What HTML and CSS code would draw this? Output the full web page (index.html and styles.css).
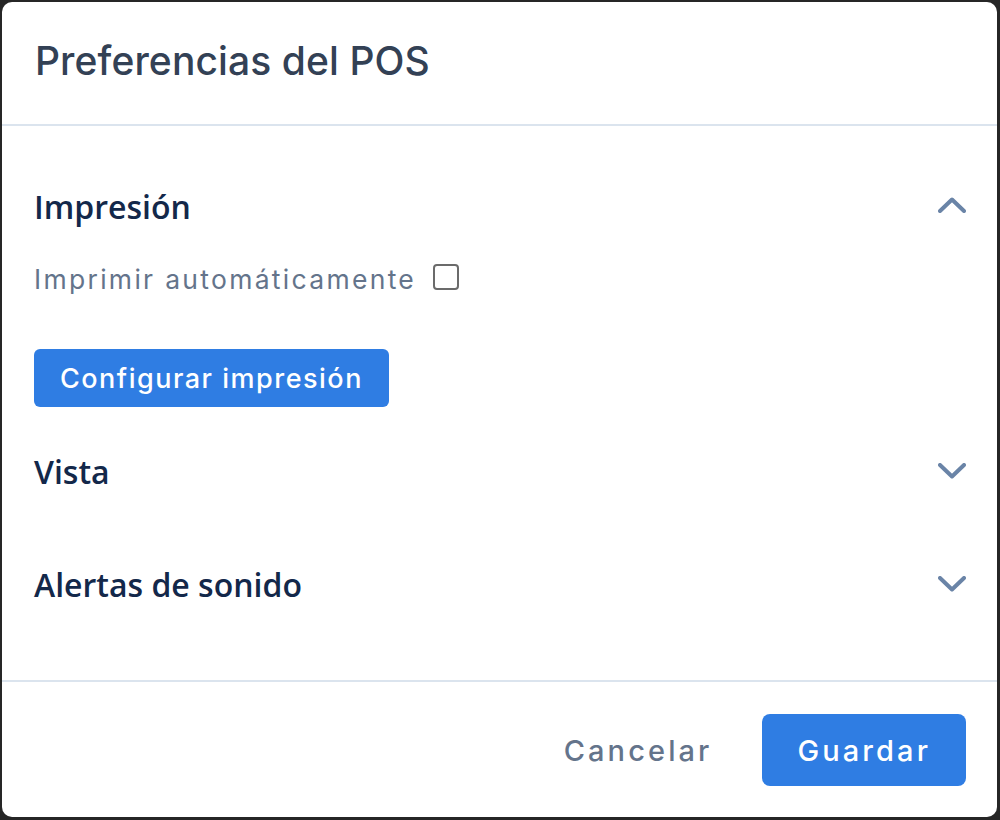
FILE: index.html
```html
<!DOCTYPE html>
<html lang="es">
<head>
<meta charset="utf-8">
<title>Preferencias del POS</title>
<link rel="stylesheet" href="styles.css">
</head>
<body>
<div class="dialog">
  <header class="dialog-header">
    <h1 class="dialog-title">Preferencias del POS</h1>
  </header>
  <main class="dialog-body">
    <section class="section is-open">
      <div class="section-head">
        <h2 class="section-title">Impresión</h2>
        <svg class="chevron chevron-up" width="28" height="16" viewBox="0 0 28 16"><polyline points="2,14 14,2.5 26,14" fill="none" stroke="currentColor" stroke-width="4" stroke-linecap="round" stroke-linejoin="round"/></svg>
      </div>
      <div class="section-content">
        <label class="check-row">
          <span class="check-label">Imprimir automáticamente</span>
          <span class="checkbox"></span>
        </label>
        <button class="btn btn-primary btn-config">Configurar impresión</button>
      </div>
    </section>
    <section class="section">
      <div class="section-head">
        <h2 class="section-title">Vista</h2>
        <svg class="chevron" width="28" height="16" viewBox="0 0 28 16"><polyline points="2,2 14,13.5 26,2" fill="none" stroke="currentColor" stroke-width="4" stroke-linecap="round" stroke-linejoin="round"/></svg>
      </div>
    </section>
    <section class="section">
      <div class="section-head">
        <h2 class="section-title">Alertas de sonido</h2>
        <svg class="chevron" width="28" height="16" viewBox="0 0 28 16"><polyline points="2,2 14,13.5 26,2" fill="none" stroke="currentColor" stroke-width="4" stroke-linecap="round" stroke-linejoin="round"/></svg>
      </div>
    </section>
  </main>
  <footer class="dialog-footer">
    <button class="btn btn-text">Cancelar</button>
    <button class="btn btn-primary btn-save">Guardar</button>
  </footer>
</div>
</body>
</html>
```
FILE: styles.css
```css
* { box-sizing: border-box; }
html, body { margin: 0; height: 100%; }
body {
  background: #262626;
  padding: 2px 3px 3px 2px;
}
.dialog {
  height: 815px;
  background: #ffffff;
  border-radius: 10px;
  display: flex;
  flex-direction: column;
  overflow: hidden;
}
.dialog-header {
  height: 124px;
  flex: none;
  border-bottom: 2px solid #dbe4ee;
  display: flex;
  align-items: center;
  padding: 0 32px 5px 33px;
}
.dialog-title {
  margin: 0;
  font-family: Inter, "Noto Sans", sans-serif;
  font-weight: 500;
  font-size: 39px;
  letter-spacing: 0.1px;
  color: #334155;
}
.dialog-body {
  flex: 1;
  padding: 44px 31px 0 32px;
  display: flex;
  flex-direction: column;
}
.section { padding-bottom: 41px; }
.section.is-open { padding-bottom: 28px; }
.section-head {
  height: 72px;
  display: flex;
  align-items: center;
  justify-content: space-between;
}
.section-title {
  margin: 0;
  font-family: "Open Sans", "Noto Sans", sans-serif;
  font-weight: 600;
  font-size: 32px;
  color: #13284a;
}
.chevron { color: #6a84a7; display: block; }
.chevron-up { margin-top: -3px; }
.section-content { padding-top: 19px; }
.check-row {
  display: flex;
  align-items: center;
  gap: 17px;
  height: 36px;
}
.check-label {
  font-family: Inter, "Noto Sans", sans-serif;
  font-size: 26.5px;
  letter-spacing: 2.3px;
  color: #64748b;
}
.checkbox {
  width: 26px;
  height: 26px;
  border: 2px solid #6b6b6b;
  border-radius: 4px;
  margin-top: -5px;
}
.btn {
  border: none;
  font-family: Inter, "Noto Sans", sans-serif;
  cursor: pointer;
  background: none;
}
.btn-primary {
  background: #2f7de3;
  color: #ffffff;
}
.btn-config {
  margin-top: 52px;
  height: 58px;
  padding: 0 26px;
  border-radius: 6px;
  font-size: 27px;
  font-weight: 500;
  letter-spacing: 1.5px;
}
.dialog-footer {
  flex: none;
  height: 137px;
  border-top: 2px solid #dbe4ee;
  display: flex;
  justify-content: flex-end;
  align-items: flex-start;
  gap: 15px;
  padding: 32px 31px 0 0;
}
.dialog-footer .btn {
  height: 72px;
  padding: 0 35px;
  border-radius: 8px;
  font-size: 29px;
  font-weight: 500;
  letter-spacing: 3.1px;
}
.btn-text { color: #64748b; }
```
